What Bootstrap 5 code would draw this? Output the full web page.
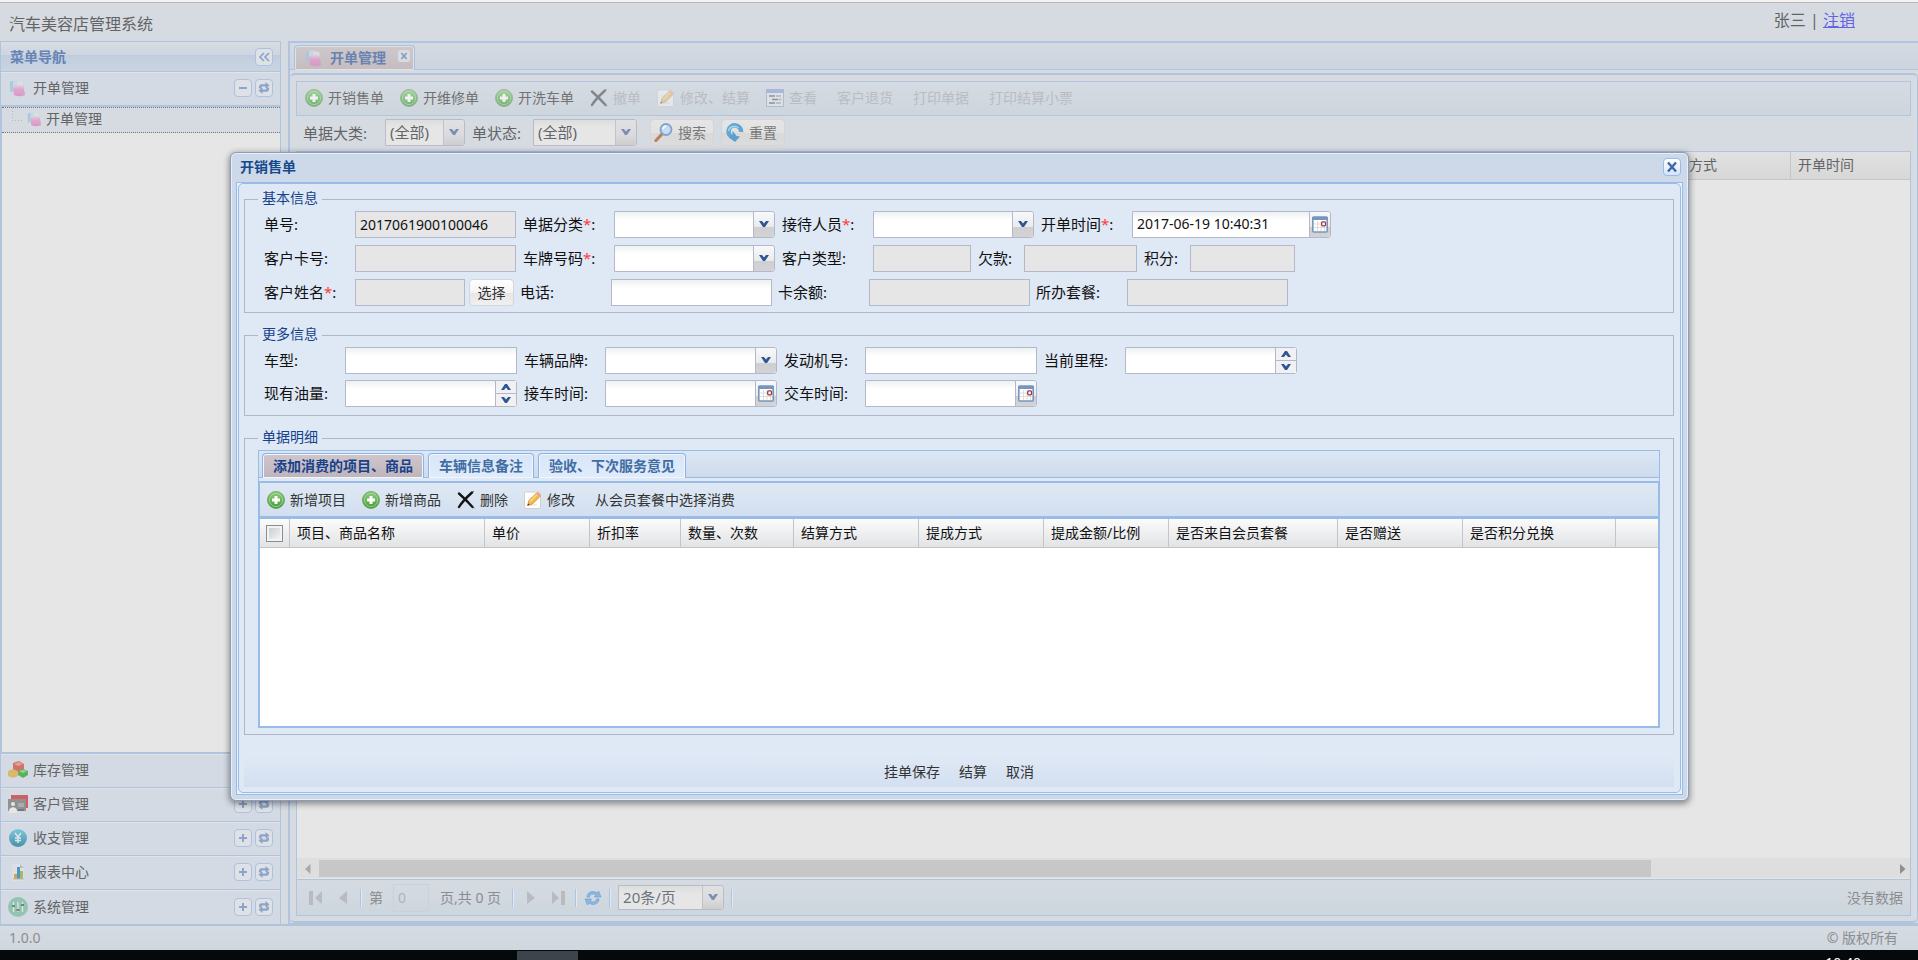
<!DOCTYPE html>
<html lang="zh-CN">
<head>
<meta charset="utf-8">
<meta name="viewport" content="width=device-width, initial-scale=1">
<title>汽车美容店管理系统</title>
<link rel="stylesheet" href="https://cdn.jsdelivr.net/npm/bootstrap@5.3.0/dist/css/bootstrap.min.css">
<style>
:root{--line:#b1c4dd;--pane:#d6dbe2;--blue:#99bbe8;--field:#b5b8c8;--ink:#636466}
body{font:14px/20px "Noto Sans","Noto Sans CJK SC",sans-serif;background:#000;color:var(--ink);height:100vh;overflow:hidden}
button,input,select{font:inherit;color:inherit}
button{border:0;background:none;padding:0}
button:disabled{color:#b9bdc2}
button:disabled svg{opacity:.42}
svg{display:block;flex:none}
.app-shell{background:var(--pane);border-top:2px solid #f3f3f3;position:relative;min-height:0}
.app-head{height:39px;border-top:1px solid #b9b4ba;font-size:16px;padding:0 63px 0 9px}
.app-head a{color:#6363e6}
.app-foot{height:26px;border-top:2px solid var(--line);background:linear-gradient(#d6dbe2,#cfd7df);color:#8c8d8f;padding:0 20px 0 9px}
.os-bar{height:10px;background:#05090c;overflow:hidden;padding-left:517px;color:#fff}
.os-bar i{width:61px;height:9px;margin-top:1px;background:#3d444b}
.os-bar span{line-height:26px;margin-right:57px}

.side{width:281px;border:1px solid var(--line);border-bottom:0}
.side-title{height:30px;background:linear-gradient(#d9dde3,#cdd5e0 45%,#c1cddf 46%,#cbd4e0);border-bottom:1px solid var(--line);font-weight:bold;color:#6484b4;padding:0 7px 0 9px}
.group{height:34px;border-bottom:1px solid var(--line);border-top:1px solid #e0e3e7;background:#d4dae3;padding:0 7px 2px;gap:5px}
.group:last-child{border-bottom:0}
.tool-sq{width:18px;height:18px;border:1px solid #adc2df;border-radius:4px;background:#dee2e7;display:grid;place-items:center;color:#8ba5ca}
.tool-sq+.tool-sq{margin-left:-2px}
.tree{background:#e6e6e6;border:1px solid var(--line);border-width:1px 0 2px 1px}
.tree-row{height:26px;background:var(--pane);border:1px dotted #777;border-width:1px 0;padding:0 0 2px 8px;gap:4px;color:var(--ink);text-decoration:none}

.work{margin-left:7px;border:2px solid var(--line);border-right:0;border-bottom:1px solid var(--line);min-width:0}
.strip{height:27px;border-bottom:1px solid var(--line);background:linear-gradient(#d5dae2,#ccd4df);padding:2px 0 0 4px}
.main-tab{width:121px;height:25px;border:1px solid #a9c0dd;border-bottom:0;border-radius:4px 4px 0 0;background:linear-gradient(#cdc8cb,#c6bcc0);box-shadow:inset 0 0 0 1px #dfe2e7;font-weight:bold;color:#6683b2;padding:0 4px 1px 9px}
.main-tab .x{width:12px;height:12px;border-radius:3px;background:#d8dde5;color:#8498b8;margin-bottom:4px}
.sheet{margin-top:3px;border:2px solid var(--line);border-width:2px 1px 2px 0;border-radius:5px;padding:6px 6px 5px;min-height:0}
.tbar{gap:16px}
.tbar button{display:flex;align-items:center;gap:5px}
.main-bar{height:35px;border:1px solid #b3c5dc;background:linear-gradient(#d6dbe3,#cdd5dd);padding:0 8px 2px;color:#717273}
.filter{height:27px;margin:3px 0 5px;padding-left:7px;font-size:15px;gap:7px}
.combo{display:flex;height:27px;border:1px solid var(--field);border-radius:0 3px 3px 0;background:#fff}
.combo>input,.combo>select{flex:1 1 0;min-width:0;border:0;outline:0;appearance:none;border-radius:0;background:linear-gradient(#edf1f1,#fff 8px);padding:0 4px 1px}
.trg{width:21px;border-left:1px solid var(--field);background:linear-gradient(#f8f9fa,#e9eaec 60%,#cfcfd1 62%,#d3d3d5);display:grid;place-items:center;color:#2f5596;border-radius:0 3px 3px 0}
.spin{width:21px;border-left:1px solid var(--field);display:flex;flex-direction:column;color:#2f5596;background:#f1f1f3}
.spin button{flex:1;display:grid;place-items:center;color:inherit}
.spin button+button{border-top:1px solid var(--field)}
.dim{background:#e6e6e6;border-color:#b9bcc8}
.dim>select{background:linear-gradient(#dcdddd,#e6e6e6 8px)}
.dim .trg{background:linear-gradient(#e0e1e2,#dbdbdd 60%,#cdcdcf);color:#7b8fb5;border-color:#c0c3cd}
.soft-btn{height:27px;border:1px solid #d3d5d8;border-radius:4px;background:linear-gradient(#e5e5e5,#e2e2e2 50%,#d9d9d9 52%,#dcdcdc);display:flex;align-items:center;gap:5px;padding:0 7px 0 3px;font-size:14px;color:#77787a}
.filter .soft-btn:first-of-type{margin-left:6px}
.grid-box{border:1px solid var(--line);background:#e6e6e6;min-height:0}
table{border-collapse:separate;border-spacing:0;table-layout:fixed;width:100%}
th{font-weight:normal}
.back-grid th{height:28px;border-bottom:1px solid #c6c6c6;background:linear-gradient(#e1e1e1,#d7d7d7);padding:0 0 2px 7px}
.back-grid th+th+th{border-left:1px solid #c6c6c6}
.hbar{height:20px;background:#dedede;padding:2px 4px 1px 8px;margin-bottom:1px;color:#8e8e8e}
.hbar b{height:17px;background:#c7c7c7;width:83.2%;margin-left:8px}
.pager{height:36px;border-top:1px solid var(--line);background:linear-gradient(#d6dbe2,#cdd6dd);padding:0 7px 0 9px;color:#8c8d8f;gap:7px}
.pager hr{width:2px;height:18px;margin:0;border:0;border-left:1px solid #a9c5ea;background:#e5e8ec;opacity:1}
.pg-btn{width:20px;height:20px;display:grid;place-items:center;color:#b8bcc1}
.pg-no{width:36px;height:28px;border:1px solid #cdd1d6;background:transparent;color:#b0b3b8;padding:0 4px;margin:0 4px 0 3px}

.veil{position:absolute;inset:0;padding:150px 0 0 1px}
.dlg{width:100%;max-width:1459px;border:1px solid #8a9dbb;border-radius:6px;background:#cdd9e8;box-shadow:inset 0 0 0 1px #e9eff7,0 2px 6px 1px #0006;padding:0 5px 5px;color:#111}
.dlg-title{height:29px;font-weight:bold;color:#15498b;padding:0 2px 1px 4px}
.dlg-x{width:18px;height:18px;border:1px solid var(--blue);border-radius:4px;background:linear-gradient(#fff,#d5e4f8);display:grid;place-items:center;color:#4264ab}
.rim{border:1px solid var(--blue);background:#e9f1fb;padding:0 1px 1px}
.rim-in{border:1px solid var(--blue);border-radius:5px;background:#dfe8f5;padding:5px 6px 5px 5px}
fieldset{border:1px solid #b0b6c6;padding:2px 13px 6px;margin-bottom:12px}
fieldset legend{height:20px;padding:0 4px;margin:0;font-size:14px;line-height:18px;color:#15428b}
.rows{display:grid;gap:7px;padding-left:6px}
.rows.tight{gap:6px;padding-bottom:2px}
.line-f{display:flex;align-items:center;gap:7px;height:27px;font-size:14px}
.line-f.snug{gap:6px}
.pair{display:flex;align-items:center}
.pair>label{width:91px;font-size:15px;padding-bottom:1px}
.pair.near>label{width:46px}
.tight .pair>label{width:81px}
.pair em{color:#ff3b3b;font-style:normal}
.w-a{width:161px}.w-b{width:199px}.w-c{width:98px}.w-d{width:113px}.w-e{width:105px}.w-f{width:110px}.w-g{width:172px}
.plain{height:27px;border:1px solid var(--field);border-radius:0;outline:0;padding:0 4px 1px;background:linear-gradient(#edf1f1,#fff 8px)}
.plain[readonly]{background:#e6e6e6}
.pick{width:45px;height:27px;margin-left:4px;border:1px solid #d3d6dc;border-radius:4px;background:linear-gradient(#fff,#f5f5f5 50%,#e6e6e6 52%,#f0f0f0);color:#333}
.detail{border:1px solid var(--blue)}
.strip2{height:27px;background:linear-gradient(#dce7f4,#cddbed);border-bottom:1px solid var(--blue);padding:2px 0 0 3px;gap:4px}
.strip2 button{height:25px;padding:0 10px;border:1px solid #8db2e3;border-bottom:0;border-radius:4px 4px 0 0;background:linear-gradient(#d8e6f8,#e0ecfb);box-shadow:inset 0 0 0 1px #f0f6fd;font-weight:bold;color:#416da3}
.strip2 button.on{background:linear-gradient(#cfc6cb,#c0b4bb);color:#15428b}
.detail-body{margin-top:3px;border:1px solid var(--blue);border-top-width:2px}
.bar2{height:33px;padding:0 7px;background:linear-gradient(#dfe9f4,#d2dff0);color:#333}
.items{border-top:3px solid var(--blue);background:#fff;min-height:210px}
.items th{height:29px;border:solid #c5c5c5;border-width:0 1px 1px 0;background:linear-gradient(#fbfbfb,#e2e3e5);padding:0 0 0 7px;color:#111}
.items th:first-child{padding-left:6px}
.items th:last-child{border-right:0}
.items input{display:block;appearance:none;width:17px;height:17px;margin:0;border:1px solid #8b8d90;background:linear-gradient(135deg,#c2c7cd,#fafafa);box-shadow:inset 0 0 0 2px #f3f3f3}
.dlg-foot{height:31px;margin-top:21px;background:linear-gradient(#dfe8f5,#d3e0f1);gap:19px;color:#333}
</style>
</head>
<body class="d-flex flex-column">
<svg width="0" height="0" class="position-absolute" aria-hidden="true">
 <defs>
 <linearGradient id="gg" x1="0" y1="0" x2="0" y2="1"><stop offset="0" stop-color="#8fd07c"/><stop offset="1" stop-color="#3f9a36"/></linearGradient>
 <linearGradient id="gb" x1="0" y1="0" x2="0" y2="1"><stop offset="0" stop-color="#7cc7dd"/><stop offset="1" stop-color="#4b8fa8"/></linearGradient>
 <linearGradient id="gp" x1="0" y1="0" x2="0" y2="1"><stop offset="0" stop-color="#e3cfdd"/><stop offset=".4" stop-color="#dfa0cc"/><stop offset="1" stop-color="#dd8cc2"/></linearGradient>
 <symbol id="i-add" viewBox="0 0 18 18"><circle cx="9" cy="9" r="8.5" fill="url(#gg)" stroke="#6a9c62" stroke-width=".8"/><circle cx="9" cy="9" r="6.6" fill="none" stroke="#a4d998" stroke-width=".8"/><path d="M9 5v8M5 9h8" stroke="#fff" stroke-width="3"/></symbol>
 <symbol id="i-del" viewBox="0 0 18 18"><path d="M2 2.5C6 6 11 11 15.500 16M15 1.500C10 6 5 11 2 16" fill="none" stroke="#151515" stroke-width="2.400" stroke-linecap="round"/><path d="M15.500 15.500l2 1.500M15.500 1l1.500-.5" stroke="#555" stroke-width="1"/></symbol>
 <symbol id="i-edit" viewBox="0 0 18 18"><rect x=".5" y="1" width="16" height="16.500" rx="1.500" fill="#fff" stroke="#cfcfcf"/><path d="M4 7h5M4 10h3M4 14h9" stroke="#dedede"/><path d="M3.500 14.500l1.500-5 7.500-7.500 3.500 3.500-7.500 7.500z" fill="#f2b84b" stroke="#cf8c2c" stroke-width=".8"/><path d="M12.500 2l1.200-1.200 3.500 3.300L16 5.500z" fill="#e7a193"/><path d="M3.500 14.500l.6-2 1.500 1.300z" fill="#333"/><path d="M6 10.500l7-7" stroke="#fbe08c" stroke-width="1.200"/></symbol>
 <symbol id="i-view" viewBox="0 0 18 18"><rect x=".5" y=".5" width="17" height="17" fill="#ecf0f5" stroke="#8795b5"/><path d="M0 0h18v4H0z" fill="#7089cc"/><path d="M3 7h6M6 10.500h6M3 14h6" stroke="#333" stroke-width="1.400"/><path d="M10 7h5M12.500 10.500h3M10 14h5" stroke="#888" stroke-width="1.400"/></symbol>
 <symbol id="i-cup" viewBox="0 0 18 18"><path d="M2 2.500l7-1.500 1 1 6 1v5l-8 4-6 1z" fill="#c3dbe6"/><path d="M2 2.500l3-.7v10.700l-3 .5z" fill="#9fcbdc"/><path d="M9 2l6 1v4H9z" fill="#e3dde3"/><path d="M4.500 7q6-2 11 0l1.500 9q-6 2.500-11 0z" fill="url(#gp)"/></symbol>
 <symbol id="i-search" viewBox="0 0 19 19"><path d="M7.500 11.500L2 17.500" stroke="#b7835f" stroke-width="3.200" stroke-linecap="round"/><circle cx="12" cy="6.500" r="5.500" fill="#c5dcf2" stroke="#82a2cf" stroke-width="1.800"/><path d="M9 6a3.500 3.500 0 0 1 3-3" fill="none" stroke="#fff" stroke-width="1.500"/></symbol>
 <symbol id="i-reset" viewBox="0 0 19 19"><path d="M8 14.500A6.200 6.200 0 1 1 16 9" fill="none" stroke="#62a5d3" stroke-width="4.500"/><path d="M7.500 7.500v5l-3.500 2 6 4.500 5-5.500-3.500-.5z" fill="#5b9fd0"/><path d="M3.500 8a6 6 0 0 1 10-3" fill="none" stroke="#a3d7e8" stroke-width="1.500"/></symbol>
 <symbol id="i-dn" viewBox="0 0 10 7"><path d="M0 0h3l2 2.500L7 0h3L6 6H4z" fill="currentColor"/></symbol>
 <symbol id="i-up" viewBox="0 0 10 7"><path d="M0 6h3l2-2.500L7 6h3L6 0H4z" fill="currentColor"/></symbol>
 <symbol id="i-cal" viewBox="0 0 16 17"><rect x=".8" y="1" width="14.400" height="15" rx="1" fill="#fff" stroke="#7796bf" stroke-width="1.600"/><path d="M0 1h16v3H0z" fill="#7796bf"/><path d="M2 8h12M2 11.500h12M5.500 5v10M9 5v10M12.500 5v10" stroke="#d5d5d5" stroke-width=".8"/><rect x="9.700" y="5.800" width="3.800" height="4" rx="1" fill="#fff" stroke="#a3353b" stroke-width="1.300"/></symbol>
 <symbol id="i-sync" viewBox="0 0 12 12"><path d="M1 6.500V5C1 2.500 2.500 2.300 4 2.300h3.500V0L11.500 3.500 7.500 6.500V4.500H4.500C3.500 4.500 3.500 5 3.500 6.500zM11 5.500V7C11 9.500 9.500 9.700 8 9.700H4.500V12L.5 8.500l4-3v2h3C8.500 7.500 8.500 7 8.500 5.500z" fill="currentColor"/></symbol>
 <symbol id="i-plus" viewBox="0 0 12 12"><path d="M6 2v8M2 6h8" stroke="currentColor" stroke-width="2"/></symbol>
 <symbol id="i-minus" viewBox="0 0 12 12"><path d="M2 6h8" stroke="currentColor" stroke-width="2"/></symbol>
 <symbol id="i-fold" viewBox="0 0 12 12"><path d="M6 2L2 6l4 4M11 2L7 6l4 4" fill="none" stroke="currentColor" stroke-width="1.700"/></symbol>
 <symbol id="i-x" viewBox="0 0 12 12"><path d="M2 1.500l8 9M10 1.500l-8 9" stroke="currentColor" stroke-width="2.400"/></symbol>
 <symbol id="i-first" viewBox="0 0 14 16"><path d="M0 1h4v14H0zM13 1v13L6 8z" fill="currentColor"/></symbol>
 <symbol id="i-prev" viewBox="0 0 14 16"><path d="M11 1v13L3 8z" fill="currentColor"/></symbol>
 <symbol id="i-refresh" viewBox="0 0 18 18"><path d="M3 8C3 3 9 1 13 4l1.500-2L17 8h-6.500l1.500-2C9 4 6 5 5.500 8z" fill="#8bb9e3" stroke="#6f9fd0" stroke-width=".7"/><path d="M15 10c0 5-6 7-10 4l-1.500 2L1 10h6.500L6 12c3 2 6 1 6.500-2z" fill="#8bb9e3" stroke="#6f9fd0" stroke-width=".7"/></symbol>
 </defs>
</svg>

<div class="app-shell flex-grow-1 d-flex flex-column">
 <header class="app-head d-flex justify-content-between align-items-center">
  <span class="pt-1">汽车美容店管理系统</span>
  <span class="pb-1">张三 | <a href="#">注销</a></span>
 </header>

 <div class="d-flex flex-grow-1" style="min-height:0">
  <nav class="side d-flex flex-column flex-shrink-0">
   <div class="side-title d-flex align-items-center justify-content-between">菜单导航<button class="tool-sq" aria-label="收起"><svg width="12" height="12"><use href="#i-fold"/></svg></button></div>
   <div class="group d-flex align-items-center"><svg width="20" height="18" opacity=".85"><use href="#i-cup" width="18"/></svg><span class="me-auto">开单管理</span><button class="tool-sq" aria-label="折叠"><svg width="12" height="12"><use href="#i-minus"/></svg></button><button class="tool-sq" aria-label="刷新"><svg width="12" height="12"><use href="#i-sync"/></svg></button></div>
   <div class="tree flex-grow-1">
    <a href="#" class="tree-row d-flex align-items-center"><svg width="12" height="24"><path d="M2.500 1v12.500H12" fill="none" stroke="#b4b8be" stroke-dasharray="1 2"/></svg><svg width="16" height="18" opacity=".85"><use href="#i-cup"/></svg>开单管理</a>
   </div>
   <div class="group d-flex align-items-center"><svg width="20" height="20" viewBox="0 0 20 20"><path d="M0 11l5-2 5 2v5l-5 2-5-2z" fill="#dbb96c"/><path d="M5 3l6-2 5 3v5l-5 3-6-3z" fill="#d07468"/><path d="M6 4l5-2 4 2-5 2z" fill="#e4a196"/><path d="M10 11l5-2 5 2v4l-5 3-5-3z" fill="#5bb05b"/><path d="M11 11l4-1 4 1-4 2z" fill="#9bd48e"/></svg><span class="me-auto">库存管理</span><button class="tool-sq" aria-label="展开"><svg width="12" height="12"><use href="#i-plus"/></svg></button><button class="tool-sq" aria-label="刷新"><svg width="12" height="12"><use href="#i-sync"/></svg></button></div>
   <div class="group d-flex align-items-center"><svg width="20" height="18" viewBox="0 0 20 18"><path d="M3 0h17v13h-3V4H3z" fill="#cf5f66"/><rect y="4" width="18" height="12" fill="#8f9193"/><circle cx="5" cy="9" r="2" fill="#e6e6e6"/><path d="M1 16c0-5 8-5 8 0v2H1z" fill="#e6e6e6"/><path d="M10 8h6v4h-6z" fill="#a9abad"/><path d="M10 14h6v2h-6z" fill="#777"/></svg><span class="me-auto">客户管理</span><button class="tool-sq" aria-label="展开"><svg width="12" height="12"><use href="#i-plus"/></svg></button><button class="tool-sq" aria-label="刷新"><svg width="12" height="12"><use href="#i-sync"/></svg></button></div>
   <div class="group d-flex align-items-center"><svg width="20" height="20" viewBox="0 0 20 20"><circle cx="10" cy="10" r="9" fill="url(#gb)"/><path d="M7 5l3 4 3-4M10 9v6M7 10h6M7 12.500h6" fill="none" stroke="#d9e6ea" stroke-width="1.600"/></svg><span class="me-auto">收支管理</span><button class="tool-sq" aria-label="展开"><svg width="12" height="12"><use href="#i-plus"/></svg></button><button class="tool-sq" aria-label="刷新"><svg width="12" height="12"><use href="#i-sync"/></svg></button></div>
   <div class="group d-flex align-items-center"><svg width="20" height="20" viewBox="0 0 20 20"><path d="M4 2h9l3 3v14H4z" fill="#dcdfe3"/><path d="M12 2l4 4h-4z" fill="#b9bcc0"/><path d="M6 12h3v5H6z" fill="#d9a24c"/><path d="M9 5h3v12H9z" fill="#4d97c2"/><path d="M12 9h3v8h-3z" fill="#9dbd62"/><path d="M5 17h11" stroke="#b5b8bc"/></svg><span class="me-auto">报表中心</span><button class="tool-sq" aria-label="展开"><svg width="12" height="12"><use href="#i-plus"/></svg></button><button class="tool-sq" aria-label="刷新"><svg width="12" height="12"><use href="#i-sync"/></svg></button></div>
   <div class="group d-flex align-items-center"><svg width="20" height="20" viewBox="0 0 20 20"><circle cx="10" cy="10" r="10" fill="#93c4b2"/><path d="M5.500 5v10M10 5v10M14.500 5v10" stroke="#dde8e4" stroke-width="1.300"/><path d="M4 8h3v2H4zM8.500 12h3v2h-3zM13 7h3v2h-3z" fill="#6f8780"/></svg><span class="me-auto">系统管理</span><button class="tool-sq" aria-label="展开"><svg width="12" height="12"><use href="#i-plus"/></svg></button><button class="tool-sq" aria-label="刷新"><svg width="12" height="12"><use href="#i-sync"/></svg></button></div>
  </nav>

  <main class="work flex-grow-1 d-flex flex-column">
   <div class="strip"><div class="main-tab d-flex align-items-center"><svg width="18" height="18" opacity=".8"><use href="#i-cup"/></svg><span class="ms-1 ps-1 me-auto">开单管理</span><button class="x d-flex align-items-center justify-content-center" aria-label="关闭标签"><svg width="8" height="8"><use href="#i-x"/></svg></button></div></div>
   <div class="sheet flex-grow-1 d-flex flex-column">
    <div class="main-bar tbar d-flex align-items-center flex-shrink-0">
     <button><svg width="18" height="18" opacity=".65"><use href="#i-add"/></svg>开销售单</button>
     <button><svg width="18" height="18" opacity=".65"><use href="#i-add"/></svg>开维修单</button>
     <button><svg width="18" height="18" opacity=".65"><use href="#i-add"/></svg>开洗车单</button>
     <button disabled><svg width="18" height="18"><use href="#i-del"/></svg>撤单</button>
     <button disabled><svg width="18" height="18"><use href="#i-edit"/></svg>修改、结算</button>
     <button disabled><svg width="18" height="18"><use href="#i-view"/></svg>查看</button>
     <button disabled class="ms-1">客户退货</button>
     <button disabled class="ms-1">打印单据</button>
     <button disabled class="ms-1">打印结算小票</button>
    </div>
    <div class="filter d-flex align-items-center flex-shrink-0">
     <label for="f1" style="width:75px">单据大类:</label>
     <div class="combo dim" style="width:80px"><select id="f1"><option>(全部)</option></select><span class="trg"><svg width="10" height="7"><use href="#i-dn"/></svg></span></div>
     <label for="f2" style="width:54px">单状态:</label>
     <div class="combo dim" style="width:104px"><select id="f2"><option>(全部)</option></select><span class="trg"><svg width="10" height="7"><use href="#i-dn"/></svg></span></div>
     <button class="soft-btn"><svg width="19" height="19"><use href="#i-search"/></svg>搜索</button>
     <button class="soft-btn"><svg width="19" height="19"><use href="#i-reset"/></svg>重置</button>
    </div>
    <div class="grid-box flex-grow-1 d-flex flex-column">
     <table class="back-grid"><colgroup><col><col style="width:136px"><col style="width:120px"></colgroup><thead><tr><th></th><th>结算方式</th><th>开单时间</th></tr></thead></table>
     <div class="hbar d-flex align-items-center mt-auto"><svg width="6" height="10"><path d="M5.500 0v10L0 5z" fill="#aaa"/></svg><b></b><svg class="ms-auto" width="6" height="10"><path d="M0 0v10l5.500-5z" fill="#8e8e8e"/></svg></div>
     <div class="pager d-flex align-items-center">
      <button class="pg-btn" aria-label="首页"><svg width="14" height="16"><use href="#i-first"/></svg></button>
      <button class="pg-btn" aria-label="上一页"><svg width="14" height="16"><use href="#i-prev"/></svg></button>
      <hr><label for="pg">第</label><input id="pg" class="pg-no" value="0"><span class="me-1">页,共 0 页</span><hr>
      <button class="pg-btn" aria-label="下一页"><svg width="14" height="16" style="transform:scaleX(-1)"><use href="#i-prev"/></svg></button>
      <button class="pg-btn" aria-label="末页"><svg width="14" height="16" style="transform:scaleX(-1)"><use href="#i-first"/></svg></button>
      <hr><button aria-label="刷新"><svg width="18" height="18"><use href="#i-refresh"/></svg></button><hr>
      <div class="combo dim text-secondary" style="width:106px;height:25px;font-size:15px"><select aria-label="每页条数"><option>20条/页</option></select><span class="trg"><svg width="10" height="7"><use href="#i-dn"/></svg></span></div><hr>
      <span class="ms-auto">没有数据</span>
     </div>
    </div>
   </div>
  </main>
 </div>

 <footer class="app-foot d-flex justify-content-between align-items-center"><span>1.0.0</span><span>© 版权所有</span></footer>

 <div class="veil d-flex justify-content-center align-items-start">
  <section class="dlg" role="dialog" aria-labelledby="dt">
   <div class="dlg-title d-flex align-items-center justify-content-between"><span id="dt">开销售单</span><button class="dlg-x" aria-label="关闭"><svg width="12" height="12"><use href="#i-x"/></svg></button></div>
   <div class="rim"><div class="rim-in">
    <fieldset>
     <legend class="float-none w-auto">基本信息</legend>
     <div class="rows">
      <div class="line-f">
       <div class="pair"><label for="a1">单号:</label><input id="a1" class="plain w-a" readonly value="2017061900100046"></div>
       <div class="pair"><label for="a2">单据分类<em>*</em>:</label><div class="combo w-a"><select id="a2"><option></option></select><span class="trg"><svg width="10" height="7"><use href="#i-dn"/></svg></span></div></div>
       <div class="pair"><label for="a3">接待人员<em>*</em>:</label><div class="combo w-a"><select id="a3"><option></option></select><span class="trg"><svg width="10" height="7"><use href="#i-dn"/></svg></span></div></div>
       <div class="pair"><label for="a4">开单时间<em>*</em>:</label><div class="combo w-b"><input id="a4" value="2017-06-19 10:40:31"><button class="trg" aria-label="选择日期"><svg width="16" height="17"><use href="#i-cal"/></svg></button></div></div>
      </div>
      <div class="line-f">
       <div class="pair"><label for="b1">客户卡号:</label><input id="b1" class="plain w-a" readonly></div>
       <div class="pair"><label for="b2">车牌号码<em>*</em>:</label><div class="combo w-a"><select id="b2"><option></option></select><span class="trg"><svg width="10" height="7"><use href="#i-dn"/></svg></span></div></div>
       <div class="pair"><label for="b3">客户类型:</label><input id="b3" class="plain w-c" readonly></div>
       <div class="pair near"><label for="b4">欠款:</label><input id="b4" class="plain w-d" readonly></div>
       <div class="pair near"><label for="b5">积分:</label><input id="b5" class="plain w-e" readonly></div>
      </div>
      <div class="line-f snug">
       <div class="pair"><label for="c1">客户姓名<em>*</em>:</label><input id="c1" class="plain w-f" readonly><button class="pick">选择</button></div>
       <div class="pair"><label for="c2">电话:</label><input id="c2" class="plain w-a"></div>
       <div class="pair"><label for="c3">卡余额:</label><input id="c3" class="plain w-a" readonly></div>
       <div class="pair"><label for="c4">所办套餐:</label><input id="c4" class="plain w-a" readonly></div>
      </div>
     </div>
    </fieldset>
    <fieldset>
     <legend class="float-none w-auto">更多信息</legend>
     <div class="rows tight">
      <div class="line-f">
       <div class="pair"><label for="d1">车型:</label><input id="d1" class="plain w-g"></div>
       <div class="pair"><label for="d2">车辆品牌:</label><div class="combo w-g"><select id="d2"><option></option></select><span class="trg"><svg width="10" height="7"><use href="#i-dn"/></svg></span></div></div>
       <div class="pair"><label for="d3">发动机号:</label><input id="d3" class="plain w-g"></div>
       <div class="pair"><label for="d4">当前里程:</label><div class="combo w-g"><input id="d4"><span class="spin"><button aria-label="增加"><svg width="10" height="7"><use href="#i-up"/></svg></button><button aria-label="减少"><svg width="10" height="7"><use href="#i-dn"/></svg></button></span></div></div>
      </div>
      <div class="line-f">
       <div class="pair"><label for="e1">现有油量:</label><div class="combo w-g"><input id="e1"><span class="spin"><button aria-label="增加"><svg width="10" height="7"><use href="#i-up"/></svg></button><button aria-label="减少"><svg width="10" height="7"><use href="#i-dn"/></svg></button></span></div></div>
       <div class="pair"><label for="e2">接车时间:</label><div class="combo w-g"><input id="e2"><button class="trg" aria-label="选择日期"><svg width="16" height="17"><use href="#i-cal"/></svg></button></div></div>
       <div class="pair"><label for="e3">交车时间:</label><div class="combo w-g"><input id="e3"><button class="trg" aria-label="选择日期"><svg width="16" height="17"><use href="#i-cal"/></svg></button></div></div>
      </div>
     </div>
    </fieldset>
    <fieldset class="mb-0">
     <legend class="float-none w-auto">单据明细</legend>
     <div class="detail">
      <div class="strip2 d-flex"><button class="on">添加消费的项目、商品</button><button>车辆信息备注</button><button>验收、下次服务意见</button></div>
      <div class="detail-body">
       <div class="bar2 tbar d-flex align-items-center">
        <button><svg width="18" height="18"><use href="#i-add"/></svg>新增项目</button>
        <button><svg width="18" height="18"><use href="#i-add"/></svg>新增商品</button>
        <button><svg width="18" height="18"><use href="#i-del"/></svg>删除</button>
        <button><svg width="18" height="18"><use href="#i-edit"/></svg>修改</button>
        <button class="ms-1">从会员套餐中选择消费</button>
       </div>
       <div class="items">
        <table>
         <colgroup><col style="width:30px"><col style="width:195px"><col style="width:105px"><col style="width:91px"><col style="width:113px"><col style="width:125px"><col style="width:125px"><col style="width:125px"><col style="width:169px"><col style="width:125px"><col style="width:153px"><col></colgroup>
         <thead><tr><th><input type="checkbox" aria-label="全选"></th><th>项目、商品名称</th><th>单价</th><th>折扣率</th><th>数量、次数</th><th>结算方式</th><th>提成方式</th><th>提成金额/比例</th><th>是否来自会员套餐</th><th>是否赠送</th><th>是否积分兑换</th><th></th></tr></thead>
        </table>
       </div>
      </div>
     </div>
    </fieldset>
    <div class="dlg-foot d-flex align-items-center justify-content-center"><button>挂单保存</button><button>结算</button><button>取消</button></div>
   </div></div>
  </section>
 </div>
</div>
<div class="os-bar d-flex justify-content-between flex-shrink-0"><i></i><span>10:40</span></div>
<script src="https://cdn.jsdelivr.net/npm/bootstrap@5.3.0/dist/js/bootstrap.bundle.min.js"></script>
</body>
</html>
